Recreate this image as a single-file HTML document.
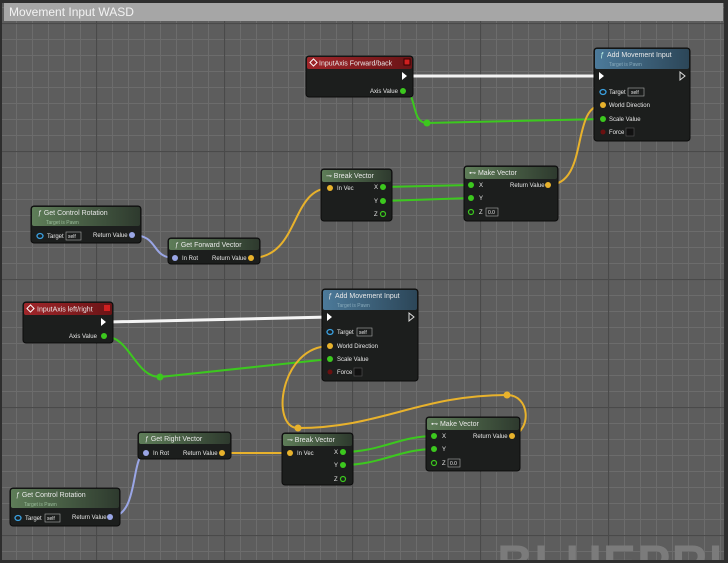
<!DOCTYPE html>
<html><head><meta charset="utf-8"><style>
html,body{margin:0;padding:0;background:#2a2a2a;overflow:hidden}
svg{display:block;font-family:"Liberation Sans",sans-serif}
</style></head><body>
<svg width="728" height="563" viewBox="0 0 728 563" xmlns="http://www.w3.org/2000/svg">
<defs>
<pattern id="minor" x="0" y="7" width="16" height="16" patternUnits="userSpaceOnUse">
<path d="M0 0.5H16M0.5 0V16" stroke="#6c6c6c" stroke-width="1" fill="none"/>
</pattern>
<pattern id="major" x="96" y="23" width="128" height="128" patternUnits="userSpaceOnUse">
<path d="M0 0.5H128M0.5 0V128" stroke="#4a4a4a" stroke-width="1.2" fill="none"/>
</pattern>
<linearGradient id="gG" x1="0" y1="0" x2="1" y2="0"><stop offset="0" stop-color="#5e7d58"/><stop offset="1" stop-color="#2e3a2e"/></linearGradient>
<linearGradient id="gR" x1="0" y1="0" x2="1" y2="0"><stop offset="0" stop-color="#a0262a"/><stop offset="1" stop-color="#6a1416"/></linearGradient>
<linearGradient id="gB" x1="0" y1="0" x2="1" y2="0"><stop offset="0" stop-color="#4c7a9a"/><stop offset="1" stop-color="#2c4658"/></linearGradient>
<clipPath id="fr"><rect x="2" y="3" width="722" height="557"/></clipPath>
</defs>
<rect x="0" y="0" width="728" height="563" fill="#2e2e2e"/>
<g clip-path="url(#fr)">
<rect x="2" y="3" width="722" height="557" fill="#5d5d5d"/>
<rect x="2" y="3" width="722" height="557" fill="url(#minor)"/>
<rect x="2" y="3" width="722" height="557" fill="url(#major)"/>
<text x="497" y="580" font-size="50" font-weight="bold" fill="#7b7b7b" letter-spacing="1">BLUEPRINT</text>
</g>
<rect x="4" y="3" width="719" height="18" fill="#a6a6a6"/>
<text x="9" y="16" font-size="12" fill="#f2f2f2">Movement Input  WASD</text>

<!-- wires -->
<g fill="none" stroke-linecap="round">
<path d="M410 76H600" stroke="#f4f4f4" stroke-width="3"/>
<path d="M108 322L330 317" stroke="#f4f4f4" stroke-width="3"/>
<g stroke="#3cc81e" stroke-width="2">
<path d="M403 91C418 91 410 123 427 123L603 119"/>
<path d="M383 187L471 185M383 201L471 198"/>
<path d="M104 336C130 336 135 377 160 377L330 359"/>
<path d="M343 452C380 452 400 436 434 436M343 465C380 465 400 449 434 449"/>
</g>
<g stroke="#e8b22c" stroke-width="2">
<path d="M548 185C590 185 570 105 603 105"/>
<path d="M251 258C300 258 290 188 330 188"/>
<path d="M512 436C532 430 530 395 507 395C420 395 380 428 298 428C270 428 280 346 330 346"/>
<path d="M222 453H290"/>
</g>
<g stroke="#9aa6e6" stroke-width="2">
<path d="M132 235C160 235 150 258 175 258"/>
<path d="M110 517C140 517 130 453 146 453"/>
</g>
</g>
<circle cx="427" cy="123" r="3.5" fill="#3cc81e"/>
<circle cx="160" cy="377" r="3.5" fill="#3cc81e"/>
<circle cx="507" cy="395" r="3.5" fill="#e8b22c"/>
<circle cx="298" cy="428" r="3.5" fill="#e8b22c"/>

<g font-size="6" fill="#e8e8e8">
<!-- InputAxis Forward/back -->
<rect x="306" y="56" width="107" height="41" rx="3" fill="#1c1e1d" stroke="#0c0c0c"/>
<rect x="307" y="57" width="105" height="12" rx="2" fill="url(#gR)"/>
<text x="319" y="65.5" font-size="7">InputAxis Forward/back</text>
<rect x="311" y="60" width="5" height="5" transform="rotate(45 313.5 62.5)" fill="none" stroke="#fff"/>
<rect x="404" y="59" width="6" height="6" fill="#d02020" stroke="#300" />
<path d="M402 72L407 76L402 80Z" fill="#fff"/>
<text x="370" y="93">Axis Value</text><circle cx="403" cy="91" r="3" fill="#3cc81e"/>

<!-- Add Movement Input top -->
<rect x="594" y="48" width="96" height="93" rx="3" fill="#1c1e1d" stroke="#0c0c0c"/>
<rect x="595" y="49" width="94" height="20" rx="2" fill="url(#gB)"/>
<text x="600" y="57" font-size="7" font-style="italic" fill="#cfe">ƒ</text>
<text x="607" y="57" font-size="7">Add Movement Input</text>
<text x="609" y="66" font-size="5" fill="#8ab">Target is Pawn</text>
<path d="M599 72L604 76L599 80Z" fill="#fff"/>
<path d="M680 72L685 76L680 80Z" fill="none" stroke="#ddd"/>
<ellipse cx="603" cy="92" rx="3" ry="2.5" fill="none" stroke="#3aa0e0" stroke-width="1.3"/><text x="609" y="94">Target</text>
<rect x="628" y="88" width="16" height="8" fill="none" stroke="#aaa" stroke-width=".6"/><text x="631" y="94" font-size="5">self</text>
<circle cx="603" cy="105" r="3" fill="#e8b22c"/><text x="609" y="107">World Direction</text>
<circle cx="603" cy="119" r="3" fill="#3cc81e"/><text x="609" y="121">Scale Value</text>
<circle cx="603" cy="132" r="2.5" fill="#6a1010"/><text x="609" y="134">Force</text>
<rect x="626" y="128" width="8" height="8" fill="#111" stroke="#555" stroke-width=".6"/>

<!-- Break Vector top -->
<rect x="321" y="169" width="71" height="52" rx="3" fill="#1c1e1d" stroke="#0c0c0c"/>
<rect x="322" y="170" width="69" height="12" rx="2" fill="url(#gG)"/>
<text x="326" y="178" font-size="7">⊸ Break Vector</text>
<circle cx="330" cy="188" r="3" fill="#e8b22c"/><text x="337" y="190">In Vec</text>
<text x="374" y="189">X</text><circle cx="383" cy="187" r="3" fill="#3cc81e"/>
<text x="374" y="203">Y</text><circle cx="383" cy="201" r="3" fill="#3cc81e"/>
<text x="374" y="216">Z</text><circle cx="383" cy="214" r="2.5" fill="none" stroke="#3cc81e" stroke-width="1.2"/>

<!-- Make Vector top -->
<rect x="464" y="166" width="94" height="55" rx="3" fill="#1c1e1d" stroke="#0c0c0c"/>
<rect x="465" y="167" width="92" height="12" rx="2" fill="url(#gG)"/>
<text x="469" y="175" font-size="7">⊷ Make Vector</text>
<circle cx="471" cy="185" r="3" fill="#3cc81e"/><text x="479" y="187">X</text>
<circle cx="471" cy="198" r="3" fill="#3cc81e"/><text x="479" y="200">Y</text>
<circle cx="471" cy="212" r="2.5" fill="none" stroke="#3cc81e" stroke-width="1.2"/><text x="479" y="214">Z</text>
<rect x="486" y="208" width="12" height="8" fill="none" stroke="#aaa" stroke-width=".6"/><text x="488" y="214" font-size="5">0.0</text>
<text x="510" y="187">Return Value</text><circle cx="548" cy="185" r="3" fill="#e8b22c"/>

<!-- Get Control Rotation top -->
<rect x="31" y="206" width="110" height="37" rx="3" fill="#1c1e1d" stroke="#0c0c0c"/>
<rect x="32" y="207" width="108" height="19" rx="2" fill="url(#gG)"/>
<text x="38" y="215" font-size="7">ƒ Get Control Rotation</text>
<text x="46" y="224" font-size="5" fill="#9b9">Target is Pawn</text>
<ellipse cx="40" cy="236" rx="3" ry="2.5" fill="none" stroke="#3aa0e0" stroke-width="1.3"/><text x="47" y="238">Target</text>
<rect x="66" y="232" width="15" height="8" fill="none" stroke="#aaa" stroke-width=".6"/><text x="68" y="238" font-size="5">self</text>
<text x="93" y="237">Return Value</text><circle cx="132" cy="235" r="3" fill="#9aa6e6"/>

<!-- Get Forward Vector -->
<rect x="168" y="238" width="92" height="26" rx="3" fill="#1c1e1d" stroke="#0c0c0c"/>
<rect x="169" y="239" width="90" height="11" rx="2" fill="url(#gG)"/>
<text x="175" y="247" font-size="7">ƒ Get Forward Vector</text>
<circle cx="175" cy="258" r="3" fill="#9aa6e6"/><text x="182" y="260">In Rot</text>
<text x="212" y="260">Return Value</text><circle cx="251" cy="258" r="3" fill="#e8b22c"/>

<!-- InputAxis left/right -->
<rect x="23" y="302" width="90" height="41" rx="3" fill="#1c1e1d" stroke="#0c0c0c"/>
<rect x="24" y="303" width="88" height="12" rx="2" fill="url(#gR)"/>
<rect x="28" y="306" width="5" height="5" transform="rotate(45 30.5 308.5)" fill="none" stroke="#fff"/>
<text x="37" y="311.5" font-size="7">InputAxis left/right</text>
<rect x="104" y="305" width="6" height="6" fill="#d02020"/>
<path d="M101 318L106 322L101 326Z" fill="#fff"/>
<text x="69" y="338">Axis Value</text><circle cx="104" cy="336" r="3" fill="#3cc81e"/>

<!-- Add Movement Input bottom -->
<rect x="322" y="289" width="96" height="92" rx="3" fill="#1c1e1d" stroke="#0c0c0c"/>
<rect x="323" y="290" width="94" height="20" rx="2" fill="url(#gB)"/>
<text x="328" y="298" font-size="7" font-style="italic">ƒ</text>
<text x="335" y="298" font-size="7">Add Movement Input</text>
<text x="337" y="307" font-size="5" fill="#8ab">Target is Pawn</text>
<path d="M327 313L332 317L327 321Z" fill="#fff"/>
<path d="M409 313L414 317L409 321Z" fill="none" stroke="#ddd"/>
<ellipse cx="330" cy="332" rx="3" ry="2.5" fill="none" stroke="#3aa0e0" stroke-width="1.3"/><text x="337" y="334">Target</text>
<rect x="357" y="328" width="15" height="8" fill="none" stroke="#aaa" stroke-width=".6"/><text x="359" y="334" font-size="5">self</text>
<circle cx="330" cy="346" r="3" fill="#e8b22c"/><text x="337" y="348">World Direction</text>
<circle cx="330" cy="359" r="3" fill="#3cc81e"/><text x="337" y="361">Scale Value</text>
<circle cx="330" cy="372" r="2.5" fill="#6a1010"/><text x="337" y="374">Force</text>
<rect x="354" y="368" width="8" height="8" fill="#111" stroke="#555" stroke-width=".6"/>

<!-- Break Vector bottom -->
<rect x="282" y="433" width="71" height="52" rx="3" fill="#1c1e1d" stroke="#0c0c0c"/>
<rect x="283" y="434" width="69" height="12" rx="2" fill="url(#gG)"/>
<text x="287" y="442" font-size="7">⊸ Break Vector</text>
<circle cx="290" cy="453" r="3" fill="#e8b22c"/><text x="297" y="455">In Vec</text>
<text x="334" y="454">X</text><circle cx="343" cy="452" r="3" fill="#3cc81e"/>
<text x="334" y="467">Y</text><circle cx="343" cy="465" r="3" fill="#3cc81e"/>
<text x="334" y="481">Z</text><circle cx="343" cy="479" r="2.5" fill="none" stroke="#3cc81e" stroke-width="1.2"/>

<!-- Make Vector bottom -->
<rect x="426" y="417" width="94" height="54" rx="3" fill="#1c1e1d" stroke="#0c0c0c"/>
<rect x="427" y="418" width="92" height="12" rx="2" fill="url(#gG)"/>
<text x="431" y="426" font-size="7">⊷ Make Vector</text>
<circle cx="434" cy="436" r="3" fill="#3cc81e"/><text x="442" y="438">X</text>
<circle cx="434" cy="449" r="3" fill="#3cc81e"/><text x="442" y="451">Y</text>
<circle cx="434" cy="463" r="2.5" fill="none" stroke="#3cc81e" stroke-width="1.2"/><text x="442" y="465">Z</text>
<rect x="448" y="459" width="12" height="8" fill="none" stroke="#aaa" stroke-width=".6"/><text x="450" y="465" font-size="5">0.0</text>
<text x="473" y="438">Return Value</text><circle cx="512" cy="436" r="3" fill="#e8b22c"/>

<!-- Get Right Vector -->
<rect x="138" y="432" width="93" height="27" rx="3" fill="#1c1e1d" stroke="#0c0c0c"/>
<rect x="139" y="433" width="91" height="11" rx="2" fill="url(#gG)"/>
<text x="145" y="441" font-size="7">ƒ Get Right Vector</text>
<circle cx="146" cy="453" r="3" fill="#9aa6e6"/><text x="153" y="455">In Rot</text>
<text x="183" y="455">Return Value</text><circle cx="222" cy="453" r="3" fill="#e8b22c"/>

<!-- Get Control Rotation bottom -->
<rect x="10" y="488" width="110" height="38" rx="3" fill="#1c1e1d" stroke="#0c0c0c"/>
<rect x="11" y="489" width="108" height="19" rx="2" fill="url(#gG)"/>
<text x="16" y="497" font-size="7">ƒ Get Control Rotation</text>
<text x="24" y="506" font-size="5" fill="#9b9">Target is Pawn</text>
<ellipse cx="18" cy="518" rx="3" ry="2.5" fill="none" stroke="#3aa0e0" stroke-width="1.3"/><text x="25" y="520">Target</text>
<rect x="45" y="514" width="15" height="8" fill="none" stroke="#aaa" stroke-width=".6"/><text x="47" y="520" font-size="5">self</text>
<text x="72" y="519">Return Value</text><circle cx="110" cy="517" r="3" fill="#9aa6e6"/>
</g>
</svg>
</body></html>
